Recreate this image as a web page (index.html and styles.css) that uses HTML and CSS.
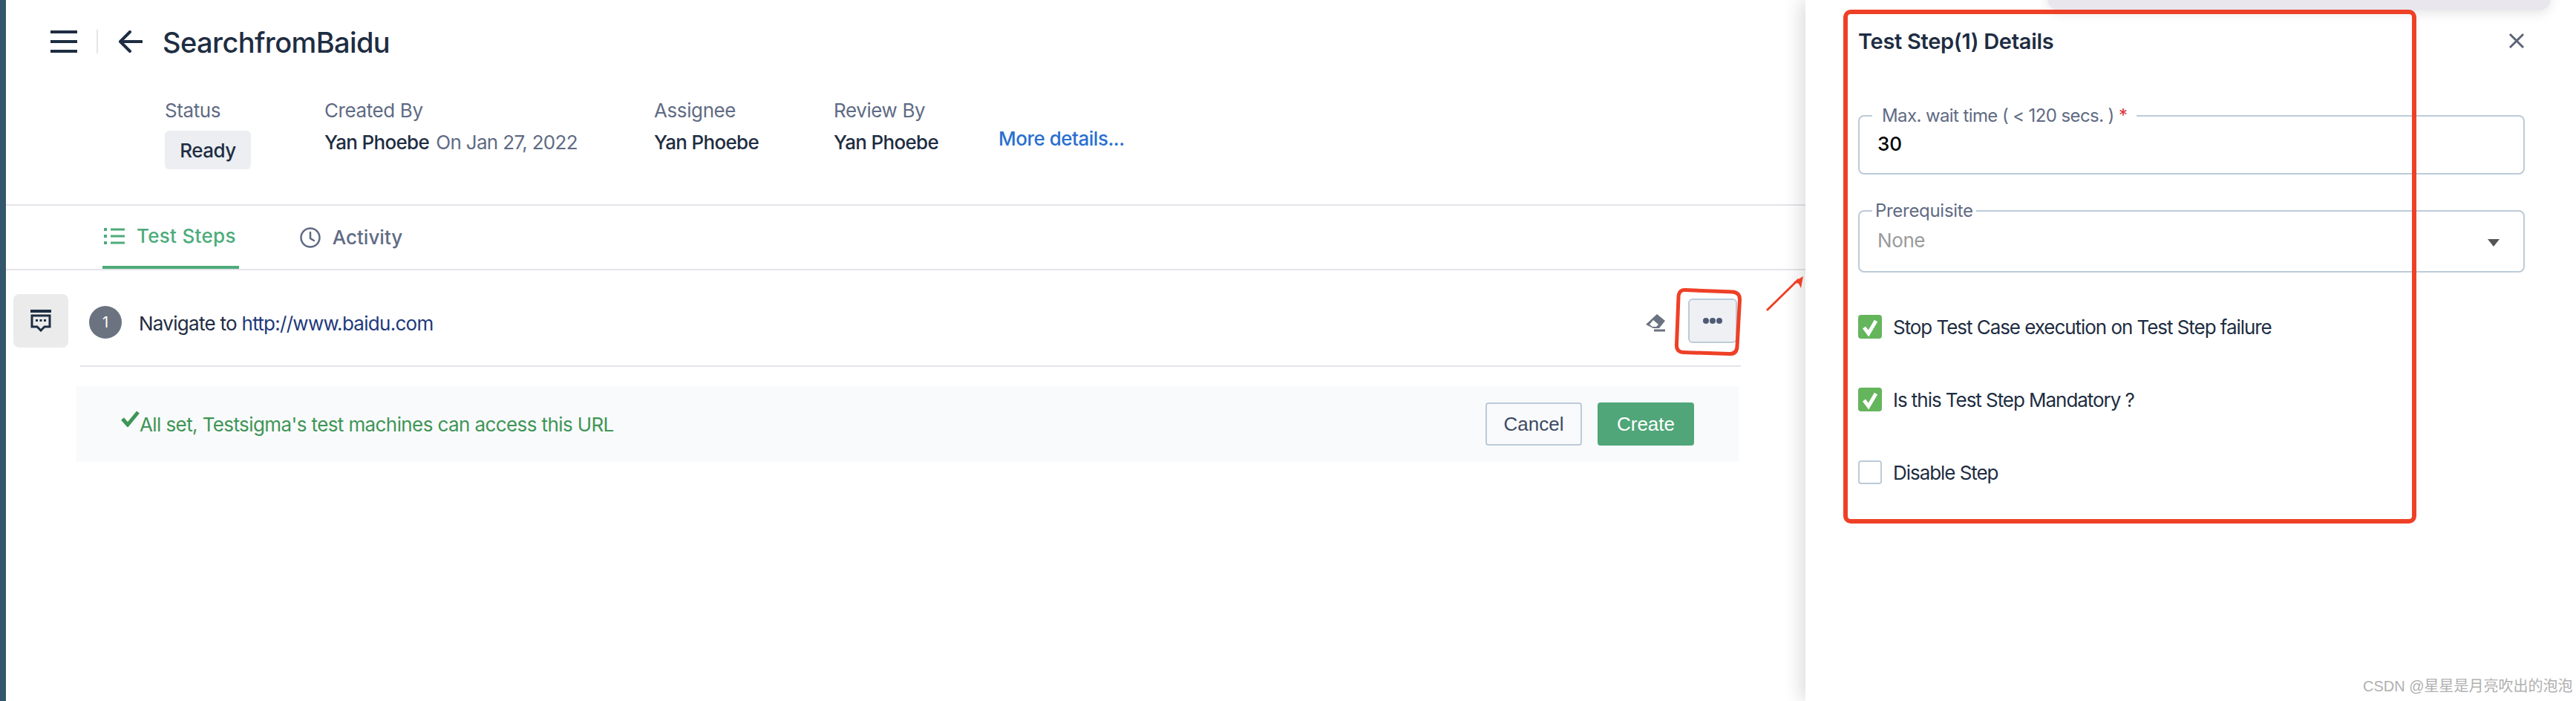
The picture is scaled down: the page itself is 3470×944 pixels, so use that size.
FILE: index.html
```html
<!DOCTYPE html>
<html lang="en">
<head>
<meta charset="utf-8">
<title>SearchfromBaidu</title>
<link rel="stylesheet" href="styles.css">
</head>
<body>
<div class="page">
  <div class="rail"></div>
  <main class="main">
    <header class="topbar">
      <svg class="burger" viewBox="0 0 36 30"><path d="M0 2h36M0 15h36M0 28h36"/></svg>
      <span class="vline"></span>
      <svg class="back" viewBox="0 0 32 30"><path d="M31 15H3M15 2 2 15l13 13"/></svg>
      <h1 class="title">SearchfromBaidu</h1>
    </header>
    <section class="meta">
      <div class="meta-col">
        <div class="meta-label">Status</div>
        <div class="badge">Ready</div>
      </div>
      <div class="meta-col">
        <div class="meta-label">Created By</div>
        <div class="meta-value">Yan Phoebe <span class="meta-date">On Jan 27, 2022</span></div>
      </div>
      <div class="meta-col">
        <div class="meta-label">Assignee</div>
        <div class="meta-value">Yan Phoebe</div>
      </div>
      <div class="meta-col">
        <div class="meta-label">Review By</div>
        <div class="meta-value">Yan Phoebe</div>
      </div>
      <a class="more">More details...</a>
    </section>
    <nav class="tabs">
      <div class="tab tab-active">
        <svg class="tab-icon" viewBox="0 0 28 24"><path d="M9 3h19M9 12h19M9 21h19"/><path class="dots" d="M0 1h4v4H0zM0 10h4v4H0zM0 19h4v4H0z"/></svg>
        <span>Test Steps</span>
      </div>
      <div class="tab">
        <svg class="tab-icon clock" viewBox="0 0 28 28"><circle cx="14" cy="14" r="12.5"/><path d="M14 7v8l5 3"/></svg>
        <span>Activity</span>
      </div>
    </nav>
    <section class="step">
      <div class="comment-box">
        <svg class="comment-icon" viewBox="0 0 30 30"><path class="bar" d="M1 2h28"/><path class="bubble" d="M3 8h24v15h-7l-5 5-5-5H3z"/><path class="dots" d="M8 13h3v3H8zM13.500 13h3v3h-3zM19 13h3v3h-3z"/></svg>
      </div>
      <div class="step-body">
        <span class="step-num">1</span>
        <span class="step-text">Navigate to <a class="step-link">http://www.baidu.com</a></span>
        <svg class="eraser" viewBox="0 0 28 24"><path class="fill" d="M16 0l11 9-8 10h-8L1 14z"/><path class="hole" d="M6 14l5-6 7 6-3 3h-5z"/><path class="line" d="M12 22h15"/></svg>
        <button class="more-btn"><svg viewBox="0 0 26 10"><circle cx="4" cy="5" r="4"/><circle cx="13" cy="5" r="4"/><circle cx="22" cy="5" r="4"/></svg></button>
      </div>
    </section>
    <section class="banner">
      <div class="banner-msg"><svg class="tick" viewBox="0 0 25 22"><path d="M2 11l7 8L23 2"/></svg>All set, Testsigma's test machines can access this URL</div>
      <div class="banner-actions">
        <button class="btn btn-cancel">Cancel</button>
        <button class="btn btn-create">Create</button>
      </div>
    </section>
  </main>
  <aside class="panel">
    <div class="panel-head">
      <h2 class="panel-title">Test Step(1) Details</h2>
      <svg class="close" viewBox="0 0 22 22"><path d="M2 2l18 18M20 2 2 20"/></svg>
    </div>
    <fieldset class="field">
      <legend class="legend legend-wide">Max. wait time ( &lt; 120 secs. ) <span class="req">*</span></legend>
      <div class="field-value">30</div>
    </fieldset>
    <fieldset class="field field-select">
      <legend class="legend">Prerequisite</legend>
      <div class="field-value placeholder">None</div>
      <span class="caret"></span>
    </fieldset>
    <ul class="checks">
      <li class="check"><span class="box box-on"><svg viewBox="0 0 32 32"><path d="M8 17l6 8 10-17"/></svg></span>Stop Test Case execution on Test Step failure</li>
      <li class="check"><span class="box box-on"><svg viewBox="0 0 32 32"><path d="M8 17l6 8 10-17"/></svg></span>Is this Test Step Mandatory ?</li>
      <li class="check"><span class="box"></span>Disable Step</li>
    </ul>
  </aside>
</div>
<div class="tray"></div>
<div class="mark-box"></div>
<svg class="marks" viewBox="0 0 3470 944">
  <path class="mark-line" d="M2270 390.500L2333 393Q2344 393.500 2343.500 404L2340 467Q2339.500 477 2329 476.500L2268 474.500Q2258 474 2258.500 464L2261 400Q2261.500 390 2270 390.500Z"/>
  <path class="mark-arrow" d="M2380 418 2423 376"/>
  <path class="mark-head" d="M2429 372l-3 16-3-6-7-2z"/>
</svg>
<div class="watermark">CSDN @星星是月亮吹出的泡泡</div>
</body>
</html>
```
FILE: styles.css
```css
* { box-sizing: border-box; }
html, body { margin: 0; padding: 0; height: 944px; overflow: hidden; background: #fff; }
body { font-family: Inter, "Noto Sans CJK SC", sans-serif; color: #1e2d42; font-size: 26px; position: relative; }
h1, h2 { margin: 0; }
ul { margin: 0; padding: 0; list-style: none; }
.page { display: flex; height: 944px; }
.rail { width: 8px; background: #34566d; flex: none; }
.main { width: 2424px; flex: none; }

.topbar { display: flex; align-items: center; height: 72px; padding: 40px 0 0 60px; }
.burger { width: 36px; height: 30px; fill: none; stroke: #1e2d42; stroke-width: 4; }
.vline { width: 2px; height: 32px; background: #e4e4ea; margin-left: 26px; }
.back { width: 32px; height: 30px; margin-left: 28px; fill: none; stroke: #1e2d42; stroke-width: 4; stroke-linecap: round; stroke-linejoin: round; }
.title { font-size: 38px; font-weight: 500; letter-spacing: -0.6px; margin: 2px 0 0 27px; color: #1e2d42; }

.meta { display: grid; grid-template-columns: 215px 444px 242px 222px auto; height: 205px; padding: 61px 0 0 214px; border-bottom: 2px solid #e4e4ea; }
.meta-label { font-size: 26px; line-height: 32px; color: #5f6b84; letter-spacing: -0.4px; }
.meta-value { font-size: 26px; line-height: 32px; margin-top: 11px; font-weight: 500; letter-spacing: -0.7px; color: #1e2d42; white-space: nowrap; }
.meta-date { font-weight: 400; color: #5f6b84; margin-left: 3px; letter-spacing: -0.67px; }
.badge { display: flex; align-items: center; justify-content: center; width: 116px; height: 52px; margin-top: 11px; background: #eceef1; border-radius: 6px; font-weight: 500; letter-spacing: -0.5px; color: #1e2d42; }
.more { color: #2a6fd0; font-weight: 500; letter-spacing: -0.5px; margin-top: 38px; line-height: 32px; white-space: nowrap; }

.tabs { display: flex; height: 87px; border-bottom: 2px solid #e4e4ea; padding-left: 130px; gap: 80px; }
.tab { display: flex; align-items: center; gap: 16px; height: 85px; color: #5f6b84; font-weight: 500; padding: 0 2px; }
.tab-active { color: #4dab7a; border-bottom: 4px solid #4dab7a; letter-spacing: 0.3px; padding-right: 4px; }
.tab-icon { width: 28px; height: 24px; fill: none; stroke: currentColor; stroke-width: 3; }
.tab-icon .dots { fill: currentColor; stroke: none; }
.clock { height: 28px; stroke-width: 2.500; stroke-linecap: round; }

.step { display: flex; padding: 32px 0 0 10px; }
.comment-box { display: flex; align-items: center; justify-content: center; width: 74px; height: 72px; background: #ebebeb; border-radius: 8px; }
.comment-icon { width: 30px; height: 30px; }
.comment-icon .bar { stroke: #1e2d42; stroke-width: 4; fill: none; }
.comment-icon .bubble { stroke: #1e2d42; stroke-width: 3; fill: none; }
.comment-icon .dots { fill: #1e2d42; }
.step-body { display: flex; align-items: center; width: 2237px; height: 98px; margin-left: 16px; padding: 6px 5px 30px 12px; border-bottom: 2px solid #e4e4ea; }
.step-num { display: flex; align-items: center; justify-content: center; width: 44px; height: 44px; margin-top: 4px; border-radius: 50%; background: #6b7280; color: #fff; font-size: 20px; }
.step-text { margin: 6px 0 0 23px; color: #1e2d42; flex: 1; letter-spacing: -0.72px; }
.step-link { color: #1e3a7b; }
.eraser { width: 28px; height: 24px; margin: 6px 30px 0 0; }
.eraser .fill { fill: #6b7280; }
.eraser .hole { fill: #fff; }
.eraser .line { stroke: #6b7280; stroke-width: 3; fill: none; }
.more-btn { display: flex; align-items: center; justify-content: center; width: 66px; height: 60px; padding: 0; background: #eef0f4; border: 2px solid #bccbd9; border-radius: 6px; }
.more-btn svg { width: 26px; height: 10px; fill: #4f5b76; }

.banner { display: flex; align-items: center; justify-content: space-between; width: 2239px; height: 102px; margin: 26px 0 0 95px; padding: 0 60px 0 60px; background: #f9fafc; }
.banner-msg { display: flex; align-items: center; color: #3f9555; white-space: nowrap; letter-spacing: -0.6px; }
.tick { width: 25px; height: 22px; margin-top: -14px; fill: none; stroke: #3f9555; stroke-width: 5; }
.banner-actions { display: flex; gap: 21px; }
.btn { width: 130px; height: 58px; padding: 0; border-radius: 4px; font-family: "Liberation Sans", sans-serif; font-size: 26px; }
.btn-cancel { background: #f9fafc; border: 2px solid #bccbd9; color: #3b4a63; }
.btn-create { background: #50a678; border: 0; color: #fff; }

.panel { width: 1038px; flex: none; height: 944px; padding: 0 69px 0 71px; background: #fff; box-shadow: -6px 0 24px rgba(0,0,0,.14); position: relative; }
.panel-head { display: flex; align-items: center; justify-content: space-between; height: 70px; padding-top: 40px; }
.panel-title { font-size: 29px; font-weight: 600; color: #1e2d42; letter-spacing: -0.3px; }
.close { width: 22px; height: 22px; fill: none; stroke: #5b6475; stroke-width: 3; }

.field { position: relative; margin: 72px 0 0; height: 93px; padding: 0 0 0 24px; border: 2px solid #bccbd9; border-radius: 8px; min-width: 0; }
.field-select { margin-top: 35px; height: 97px; }
.legend { margin-left: -7px; padding: 0 4px; font-size: 24px; line-height: 28px; color: #5f6b84; letter-spacing: -0.3px; }
.legend-wide { padding: 0 13px; letter-spacing: -0.6px; }
.req { color: #d9363e; }
.field-value { font-size: 26px; font-weight: 500; line-height: 32px; color: #000; margin-top: 8px; }
.placeholder { font-weight: 400; color: #9a9a9a; margin-top: 10px; letter-spacing: -0.4px; }
.caret { position: absolute; right: 32px; top: 24px; border-left: 8px solid transparent; border-right: 8px solid transparent; border-top: 10px solid #555; }

.checks { margin-top: 57px; }
.check { display: flex; align-items: center; height: 32px; margin-bottom: 66px; font-size: 26px; letter-spacing: -1.05px; color: #1e2d42; white-space: nowrap; }
.box { width: 32px; height: 32px; margin-right: 15px; border: 2px solid #bccbd9; border-radius: 4px; flex: none; }
.box-on { background: #64b55c; border: 0; }
.box-on svg { display: block; width: 32px; height: 32px; fill: none; stroke: #fff; stroke-width: 5; }

.tray { position: absolute; left: 2758px; top: -20px; width: 678px; height: 34px; background: #e9e6ee; border-radius: 16px; box-shadow: 0 4px 16px rgba(0,0,0,.1); }
.mark-box { position: absolute; left: 2483px; top: 13px; width: 772px; height: 692px; border: 6px solid #ee4026; border-radius: 10px; }
.marks { position: absolute; left: 0; top: 0; width: 3470px; height: 944px; pointer-events: none; }
.mark-line { fill: none; stroke: #ee4026; stroke-width: 5; stroke-linejoin: round; }
.mark-arrow { fill: none; stroke: #ee4026; stroke-width: 3; }
.mark-head { fill: #ee4026; }
.watermark { position: absolute; left: 3183px; top: 912px; font-size: 20px; line-height: 24px; color: #b0b0b0; white-space: nowrap; font-family: "Liberation Sans", "Noto Sans CJK SC", sans-serif; }
```
